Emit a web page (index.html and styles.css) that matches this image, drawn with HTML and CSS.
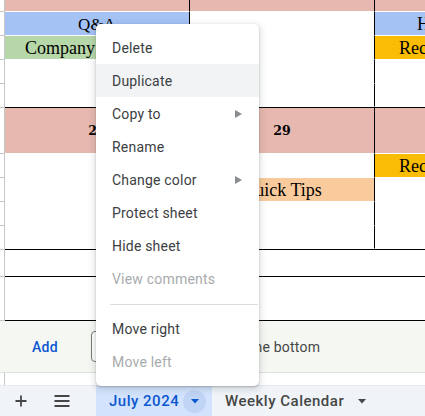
FILE: index.html
```html
<!DOCTYPE html>
<html>
<head>
<meta charset="utf-8">
<title>Sheet tabs menu</title>
<link rel="stylesheet" href="styles.css">
</head>
<body>
<div class="page">
  <div class="sheet">
    <div class="rowhdr">
      <div class="h r1"></div>
      <div class="h r2"></div>
      <div class="h r3"></div>
      <div class="h r4"></div>
      <div class="h hr5"></div>
      <div class="h hr6"></div>
      <div class="h r7"></div>
      <div class="h r8"></div>
      <div class="h r9"></div>
      <div class="h hr10"></div>
      <div class="h r11"></div>
      <div class="h hr12"></div>
    </div>
    <div class="cells">
      <div class="row r1">
        <div class="cell c1 pink"></div>
        <div class="cell c2 pink"></div>
        <div class="cell c3 pink"></div>
      </div>
      <div class="row r2">
        <div class="cell c1 blue qa">Q&amp;A</div>
        <div class="cell c2"></div>
        <div class="cell c3 blue lft pad-h">Holiday Party</div>
      </div>
      <div class="row r3">
        <div class="cell c1 green lft pad-c">Company Meeting</div>
        <div class="cell c2"></div>
        <div class="cell c3 amber lft pad-r">Recording Session</div>
      </div>
      <div class="row r4">
        <div class="cell c1"></div>
        <div class="cell c2"></div>
        <div class="cell c3"></div>
      </div>
      <div class="row r5">
        <div class="cell c1"></div>
        <div class="cell c2"></div>
        <div class="cell c3"></div>
      </div>
      <div class="row r6">
        <div class="cell c1 pink date">28</div>
        <div class="cell c2 pink date">29</div>
        <div class="cell c3 pink date">30</div>
      </div>
      <div class="row r7">
        <div class="cell c1"></div>
        <div class="cell c2"></div>
        <div class="cell c3 amber lft pad-r">Recording Session</div>
      </div>
      <div class="row r8">
        <div class="cell c1"></div>
        <div class="cell c2 peach">Quick Tips</div>
        <div class="cell c3"></div>
      </div>
      <div class="row r9">
        <div class="cell c1"></div>
        <div class="cell c2"></div>
        <div class="cell c3"></div>
      </div>
      <div class="row r10">
        <div class="cell c1"></div>
        <div class="cell c2"></div>
        <div class="cell c3"></div>
      </div>
      <div class="row r11"><div class="cell full"></div></div>
      <div class="row r12"><div class="cell full"></div></div>
    </div>
  </div>

  <div class="addbar">
    <span class="add">Add</span>
    <span class="rowsbox">1000</span>
    <span class="addtext">more rows at the bottom</span>
  </div>

  <div class="gap"><div class="gapstrip"></div></div>

  <div class="tabbar">
    <div class="tbtn plus">
      <svg width="12" height="12" viewBox="0 0 12 12"><path d="M6 0.5v11M0.5 6h11" stroke="#444746" stroke-width="1.8" fill="none"/></svg>
    </div>
    <div class="tbtn list">
      <svg width="16" height="12" viewBox="0 0 16 12"><path d="M0.5 1h15M0.5 6h15M0.5 11h15" stroke="#444746" stroke-width="1.8" fill="none"/></svg>
    </div>
    <div class="tab active">
      <span class="tabname">July 2024</span>
      <span class="tabdrop"><svg width="8" height="5" viewBox="0 0 8 5"><path d="M0 0h8L4 4.5z" fill="#0b57d0"/></svg></span>
    </div>
    <div class="tab">
      <span class="tabname">Weekly Calendar</span>
      <span class="tabarrow"><svg width="8" height="5" viewBox="0 0 8 5"><path d="M0 0h8L4 4.5z" fill="#444746"/></svg></span>
    </div>
  </div>

  <div class="menu">
    <div class="item">Delete</div>
    <div class="item hover">Duplicate</div>
    <div class="item">Copy to<span class="arr"><svg width="7" height="8" viewBox="0 0 7 8"><path d="M0 0L7 4L0 8z" fill="#8a8d90"/></svg></span></div>
    <div class="item">Rename</div>
    <div class="item">Change color<span class="arr"><svg width="7" height="8" viewBox="0 0 7 8"><path d="M0 0L7 4L0 8z" fill="#8a8d90"/></svg></span></div>
    <div class="item">Protect sheet</div>
    <div class="item">Hide sheet</div>
    <div class="item dis">View comments</div>
    <div class="sep"></div>
    <div class="item">Move right</div>
    <div class="item dis">Move left</div>
  </div>
</div>
</body>
</html>
```

FILE: styles.css
```css
html, body {
  margin: 0;
  padding: 0;
}
body {
  width: 425px;
  height: 416px;
  overflow: hidden;
  background: #fff;
  font-family: Roboto, "Liberation Sans", sans-serif;
}
.page {
  position: relative;
  width: 425px;
  height: 416px;
  overflow: hidden;
}

/* ---------- sheet grid ---------- */
.sheet {
  display: flex;
  height: 321px;
}
.rowhdr {
  width: 4px;
  border-right: 1px solid #c4c7c5;
  display: flex;
  flex-direction: column;
  flex: none;
}
.rowhdr .h {
  box-sizing: border-box;
  border-bottom: 1px solid #c4c7c5;
  flex: none;
}
.cells {
  width: 420px;
  overflow: hidden;
  display: flex;
  flex-direction: column;
}
.row {
  display: flex;
  box-sizing: border-box;
  flex: none;
}
.r1 { height: 12px; }
.r2, .r3, .r4, .r7, .r8, .r9 { height: 24px; }
.r5, .r10 { height: 23px; }
.r6 { height: 47px; border-top: 1px solid #000; }
.r11 { height: 27px; border-top: 1px solid #000; }
.r12 { height: 45px; border-top: 1px solid #000; border-bottom: 1px solid #000; }
.hr5, .hr10 { height: 24px; }
.hr6 { height: 46px; }
.hr12 { height: 44px; }
.rowhdr .r11 { border-top: 0; }
.rowhdr .r6 { border-top: 0; }

.cell {
  box-sizing: border-box;
  border-bottom: 1px solid #fff;
  display: flex;
  align-items: center;
  justify-content: center;
  padding-top: 2px;
  font-family: "Liberation Serif", "Times New Roman", serif;
  font-size: 18px;
  color: #000;
  white-space: nowrap;
  flex: none;
}
.c1, .c2 {
  width: 185px;
  border-right: 1px solid #000;
}
.c3 { width: 185px; }
.full { width: 420px; border-bottom: 0; }

.pink { background: #e6b8af; }
.blue { background: #a4c2f4; }
.green { background: #b6d7a8; }
.amber { background: #fbbc04; }
.peach { background: #f9cb9c; }

.qa { font-size: 17px; }
.lft { justify-content: flex-start; }
.pad-c { padding-left: 20px; }
.pad-h { padding-left: 42px; }
.pad-r { padding-left: 24px; }
.date {
  font-family: "DejaVu Serif", serif;
  font-weight: bold;
  font-size: 12.5px;
  padding-top: 0;
}

/* ---------- add rows bar ---------- */
.addbar {
  height: 52px;
  box-sizing: border-box;
  border-bottom: 1px solid #dfe1e0;
  background: #f5f7f3;
  display: flex;
  align-items: center;
  padding-left: 32px;
  font-size: 14px;
  color: #444746;
}
.add {
  color: #0b57d0;
  font-weight: 500;
  letter-spacing: 0.3px;
}
.rowsbox {
  margin-left: 33px;
  width: 60px;
  height: 31px;
  box-sizing: border-box;
  border: 1px solid #747775;
  border-radius: 4px;
  display: flex;
  align-items: center;
  padding-left: 10px;
  background: #fff;
}
.addtext {
  margin-left: 11px;
  font-size: 14px;
  letter-spacing: 0.2px;
}

.gap {
  height: 12px;
  display: flex;
}
.gapstrip {
  width: 4px;
  border-right: 1px solid #c4c7c5;
}

/* ---------- tab bar ---------- */
.tabbar {
  height: 31px;
  box-sizing: border-box;
  background: #f0f4f9;
  border-top: 1px solid #e6e9ee;
  display: flex;
  align-items: stretch;
}
.tbtn {
  display: flex;
  align-items: center;
  justify-content: center;
  flex: none;
}
.plus { width: 42px; }
.list { width: 40px; margin-right: 14px; }
.tab {
  display: flex;
  align-items: center;
  padding-left: 13px;
  font-size: 15px;
  font-weight: 500;
  letter-spacing: 0.5px;
  color: #444746;
}
.tab.active {
  background: #d3e3fd;
  color: #0b57d0;
  width: 116px;
  box-sizing: border-box;
}
.tabdrop {
  margin-left: 4px;
  width: 23px;
  height: 23px;
  border-radius: 50%;
  background: #c0d4f6;
  display: flex;
  align-items: center;
  justify-content: center;
}
.tabarrow {
  margin-left: 14px;
  display: flex;
  align-items: center;
}

/* ---------- context menu ---------- */
.menu {
  position: absolute;
  left: 96px;
  top: 24px;
  width: 163px;
  box-sizing: border-box;
  padding: 7px 0 8px;
  background: #fff;
  border-radius: 5px;
  box-shadow: 0 2px 6px 2px rgba(60, 64, 67, 0.15), 0 1px 2px 0 rgba(60, 64, 67, 0.3);
}
.item {
  height: 33px;
  display: flex;
  align-items: center;
  padding: 0 17px 0 16px;
  font-size: 14px;
  letter-spacing: 0.2px;
  color: #3c4043;
}
.item.hover { background: #f1f3f4; }
.item.dis { color: #a8abad; }
.arr {
  margin-left: auto;
  display: flex;
  align-items: center;
}
.sep {
  height: 1px;
  background: #dadce0;
  margin: 9px 1px 7px 14px;
}
```
